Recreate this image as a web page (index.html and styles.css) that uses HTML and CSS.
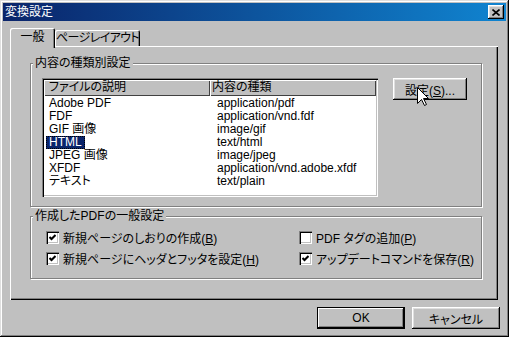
FILE: index.html
```html
<!DOCTYPE html>
<html lang="ja">
<head>
  <meta charset="UTF-8" />
  <meta name="viewport" content="width=device-width, initial-scale=1.0"/>
  <title>変換設定</title>
  <link rel="stylesheet" href="styles.css">
</head>
<body>
  <div class="window">
    <div class="titlebar">
      <span class="title">変換設定</span>
      <button class="close-btn" aria-label="閉じる">
        <svg width="8" height="7" viewBox="0 0 8 7"><path d="M0.5 0.5L7.5 6.5M7.5 0.5L0.5 6.5" stroke="#000" stroke-width="1.6"/></svg>
      </button>
    </div>

    <div class="client">
      <div class="tabs">
        <div class="tab active tab-general">一般</div>
        <div class="tab tab-layout">ページレイアウト</div>
      </div>

      <div class="panel">
        <fieldset class="group group-types">
          <legend>内容の種類別設定</legend>
          <div class="group-body">
            <div class="listview">
              <div class="lv-header">
                <div class="lv-head c1">ファイルの説明</div>
                <div class="lv-head c2">内容の種類</div>
              </div>
              <div class="lv-row"><div class="c1"><span>Adobe PDF</span></div><div class="c2"><span>application/pdf</span></div></div>
              <div class="lv-row"><div class="c1"><span>FDF</span></div><div class="c2"><span>application/vnd.fdf</span></div></div>
              <div class="lv-row"><div class="c1"><span>GIF 画像</span></div><div class="c2"><span>image/gif</span></div></div>
              <div class="lv-row selected"><div class="c1"><span>HTML</span></div><div class="c2"><span>text/html</span></div></div>
              <div class="lv-row"><div class="c1"><span>JPEG 画像</span></div><div class="c2"><span>image/jpeg</span></div></div>
              <div class="lv-row"><div class="c1"><span>XFDF</span></div><div class="c2"><span>application/vnd.adobe.xfdf</span></div></div>
              <div class="lv-row"><div class="c1"><span>テキスト</span></div><div class="c2"><span>text/plain</span></div></div>
            </div>
            <button class="btn btn-setting">設定(<u>S</u>)...
              <svg class="cursor" width="12" height="19" viewBox="0 0 12 19"><path d="M0.5 0.5V16.5L4.5 12.5L7.5 18.5L9.5 17.5L6.5 11.5H11.5Z" fill="#fff" stroke="#000"/></svg>
            </button>
          </div>
        </fieldset>

        <fieldset class="group group-pdf">
          <legend>作成したPDFの一般設定</legend>
          <div class="checks">
            <label class="check"><span class="box"><svg width="7" height="7" viewBox="0 0 7 7"><path d="M0.5 3L2.5 5L6.5 1" fill="none" stroke="#000" stroke-width="2"/></svg></span><span class="check-text">新規ページのしおりの作成(<u>B</u>)</span></label>
            <label class="check"><span class="box"></span><span class="check-text">PDF タグの追加(<u>P</u>)</span></label>
            <label class="check"><span class="box"><svg width="7" height="7" viewBox="0 0 7 7"><path d="M0.5 3L2.5 5L6.5 1" fill="none" stroke="#000" stroke-width="2"/></svg></span><span class="check-text">新規ページにヘッダとフッタを設定(<u>H</u>)</span></label>
            <label class="check"><span class="box"><svg width="7" height="7" viewBox="0 0 7 7"><path d="M0.5 3L2.5 5L6.5 1" fill="none" stroke="#000" stroke-width="2"/></svg></span><span class="check-text">アップデートコマンドを保存(<u>R</u>)</span></label>
          </div>
        </fieldset>
      </div>

      <div class="actions">
        <button class="btn btn-default">OK</button>
        <button class="btn">キャンセル</button>
      </div>
    </div>
  </div>
</body>
</html>
```

FILE: styles.css
```css
* {
  box-sizing: border-box;
}
body {
  margin: 0;
  font-family: "Liberation Sans", "Noto Sans CJK JP", sans-serif;
  font-size: 12px;
  font-feature-settings: "palt";
  color: #000;
  background: #c0c0c0;
}
u {
  text-decoration: underline;
  text-underline-offset: 1px;
}
.window {
  width: 509px;
  height: 337px;
  padding: 3px;
  background: #c0c0c0;
  display: flex;
  flex-direction: column;
  box-shadow: inset -1px -1px #000, inset 1px 1px #dfdfdf, inset -2px -2px #808080, inset 2px 2px #fff;
}
.titlebar {
  height: 18px;
  display: flex;
  align-items: center;
  justify-content: space-between;
  padding: 0 2px 0 2px;
  background: linear-gradient(90deg, #0a246a, #1084d0);
  color: #fff;
}
.title {
  line-height: 14px;
}
.close-btn {
  width: 16px;
  height: 14px;
  padding: 0;
  border: 0;
  background: #c0c0c0;
  display: flex;
  align-items: center;
  justify-content: center;
  box-shadow: inset -1px -1px #000, inset 1px 1px #fff, inset -2px -2px #808080, inset 2px 2px #dfdfdf;
}
.client {
  flex: 1;
  padding: 7px 8px 0 7px;
  display: flex;
  flex-direction: column;
}
.tabs {
  display: flex;
  align-items: flex-end;
  height: 18px;
  position: relative;
  z-index: 1;
}
.tab {
  height: 16px;
  line-height: 16px;
  text-align: center;
  white-space: nowrap;
  background: #c0c0c0;
  border-radius: 2px 2px 0 0;
  box-shadow: inset 1px 1px #fff, inset -1px 0 #000, inset -2px 0 #808080;
}
.tab.active {
  height: 20px;
  margin-bottom: -2px;
  line-height: 18px;
}
.tab-general {
  width: 45px;
}
.tab-layout {
  width: 85px;
  letter-spacing: -0.6px;
}
.panel {
  height: 254px;
  padding: 10px 16px 0 20px;
  display: flex;
  flex-direction: column;
  gap: 2px;
  box-shadow: inset 1px 1px #fff, inset -1px -1px #000, inset -2px -2px #808080;
}
.group {
  margin: 0;
  padding: 0;
  min-width: 0;
  border: 1px solid #808080;
  box-shadow: inset 1px 1px #fff, 1px 1px #fff;
}
.group legend {
  margin-left: 2px;
  padding: 0 2px;
  line-height: 14px;
  background: #c0c0c0;
}
.group-types .group-body {
  display: flex;
  align-items: flex-start;
  padding: 8px 0 9px 11px;
}
.listview {
  width: 336px;
  height: 119px;
  padding: 2px;
  background: #fff;
  box-shadow: inset 1px 1px #808080, inset 2px 2px #000, inset -1px -1px #fff, inset -2px -2px #c0c0c0;
}
.lv-header {
  display: flex;
  height: 16px;
}
.lv-head {
  line-height: 15px;
  background: #c0c0c0;
  box-shadow: inset 1px 1px #fff, inset -1px -1px #404040;
}
.lv-head.c1 {
  width: 166px;
  padding-left: 5px;
}
.lv-head.c2 {
  flex: 1;
  padding-left: 2px;
}
.lv-row {
  display: flex;
  height: 13px;
}
.lv-row .c1 {
  width: 166px;
  padding-left: 2px;
}
.lv-row .c2 {
  padding-left: 4px;
}
.lv-row span {
  display: inline-block;
  line-height: 11px;
  padding: 0 2px;
  border: 1px solid transparent;
  white-space: nowrap;
}
.lv-row.selected .c1 span {
  background: #0a246a;
  color: #fff;
  border: 1px dotted #fff;
  outline: 1px dotted #000;
  outline-offset: -1px;
}
.btn {
  font: inherit;
  font-feature-settings: "palt";
  color: #000;
  background: #c0c0c0;
  border: 0;
  padding: 0;
  box-shadow: inset -1px -1px #000, inset 1px 1px #fff, inset -2px -2px #808080, inset 2px 2px #dfdfdf;
}
.btn-setting {
  width: 74px;
  height: 22px;
  margin-left: 15px;
  position: relative;
}
.cursor {
  position: absolute;
  left: 24px;
  top: 9px;
}
.checks {
  display: grid;
  grid-template-columns: 253px 1fr;
  row-gap: 4px;
  padding: 6px 0 11px 15px;
}
.check {
  display: flex;
  align-items: center;
  gap: 4px;
  height: 17px;
}
.check-text {
  white-space: nowrap;
}
.box {
  width: 13px;
  height: 13px;
  flex: none;
  background: #fff;
  display: flex;
  align-items: center;
  justify-content: center;
  box-shadow: inset 1px 1px #808080, inset 2px 2px #000, inset -1px -1px #fff, inset -2px -2px #c0c0c0;
}
.actions {
  display: flex;
  justify-content: flex-end;
  gap: 7px;
  margin-top: 7px;
  margin-right: -2px;
}
.actions .btn {
  width: 88px;
  height: 22px;
}
.btn-default {
  box-shadow: inset 0 0 0 1px #000, inset -2px -2px #000, inset 2px 2px #fff, inset -3px -3px #808080;
}
```
